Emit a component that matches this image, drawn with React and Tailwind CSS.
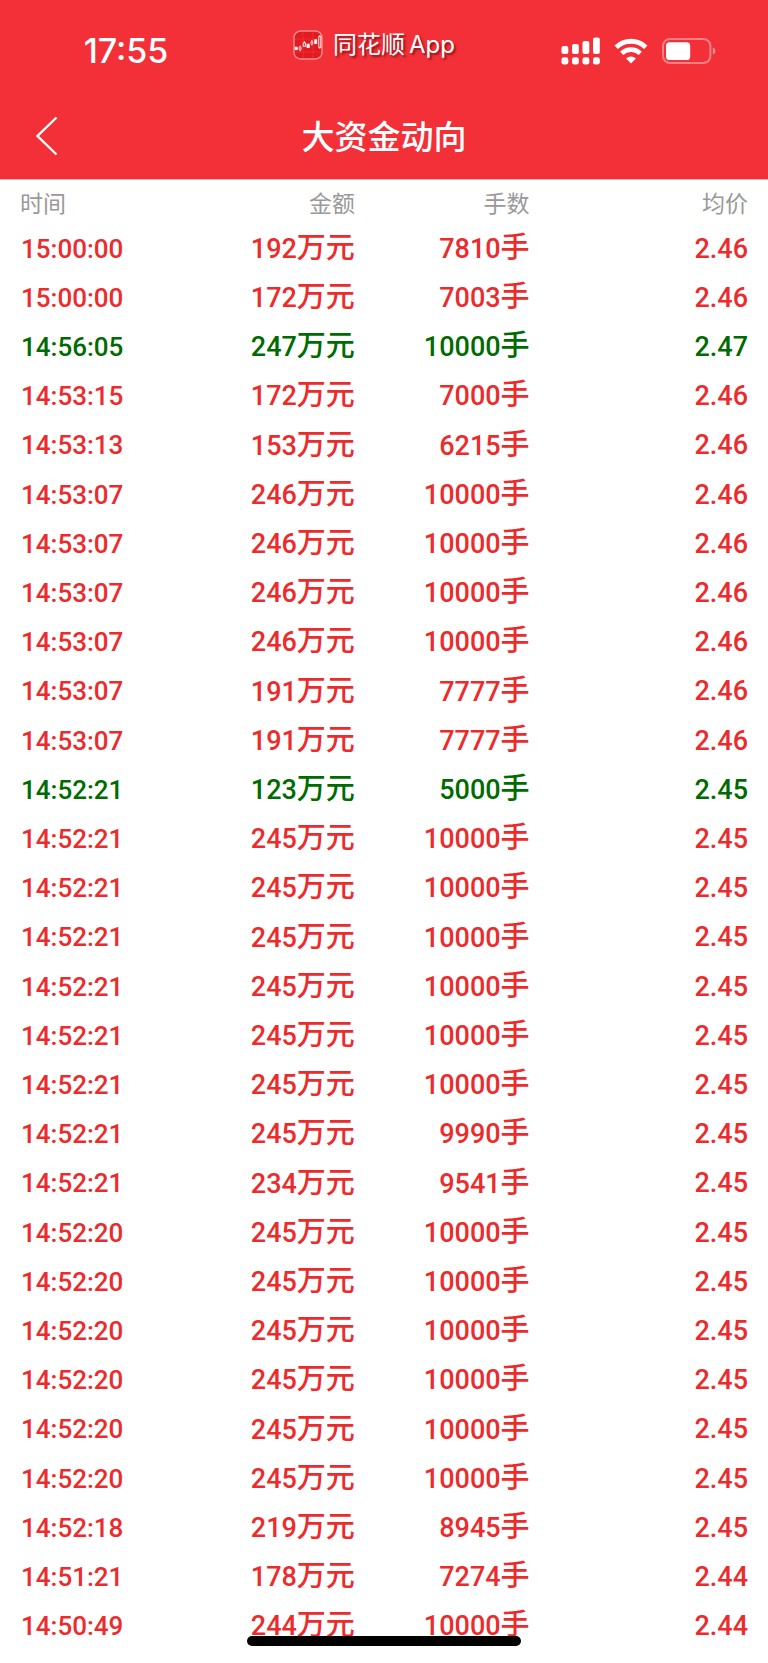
const TRADES = [
  { time: "15:00:00", amount: 192, hands: 7810, price: "2.46", side: "buy" },
  { time: "15:00:00", amount: 172, hands: 7003, price: "2.46", side: "buy" },
  { time: "14:56:05", amount: 247, hands: 10000, price: "2.47", side: "sell" },
  { time: "14:53:15", amount: 172, hands: 7000, price: "2.46", side: "buy" },
  { time: "14:53:13", amount: 153, hands: 6215, price: "2.46", side: "buy" },
  { time: "14:53:07", amount: 246, hands: 10000, price: "2.46", side: "buy" },
  { time: "14:53:07", amount: 246, hands: 10000, price: "2.46", side: "buy" },
  { time: "14:53:07", amount: 246, hands: 10000, price: "2.46", side: "buy" },
  { time: "14:53:07", amount: 246, hands: 10000, price: "2.46", side: "buy" },
  { time: "14:53:07", amount: 191, hands: 7777, price: "2.46", side: "buy" },
  { time: "14:53:07", amount: 191, hands: 7777, price: "2.46", side: "buy" },
  { time: "14:52:21", amount: 123, hands: 5000, price: "2.45", side: "sell" },
  { time: "14:52:21", amount: 245, hands: 10000, price: "2.45", side: "buy" },
  { time: "14:52:21", amount: 245, hands: 10000, price: "2.45", side: "buy" },
  { time: "14:52:21", amount: 245, hands: 10000, price: "2.45", side: "buy" },
  { time: "14:52:21", amount: 245, hands: 10000, price: "2.45", side: "buy" },
  { time: "14:52:21", amount: 245, hands: 10000, price: "2.45", side: "buy" },
  { time: "14:52:21", amount: 245, hands: 10000, price: "2.45", side: "buy" },
  { time: "14:52:21", amount: 245, hands: 9990, price: "2.45", side: "buy" },
  { time: "14:52:21", amount: 234, hands: 9541, price: "2.45", side: "buy" },
  { time: "14:52:20", amount: 245, hands: 10000, price: "2.45", side: "buy" },
  { time: "14:52:20", amount: 245, hands: 10000, price: "2.45", side: "buy" },
  { time: "14:52:20", amount: 245, hands: 10000, price: "2.45", side: "buy" },
  { time: "14:52:20", amount: 245, hands: 10000, price: "2.45", side: "buy" },
  { time: "14:52:20", amount: 245, hands: 10000, price: "2.45", side: "buy" },
  { time: "14:52:20", amount: 245, hands: 10000, price: "2.45", side: "buy" },
  { time: "14:52:18", amount: 219, hands: 8945, price: "2.45", side: "buy" },
  { time: "14:51:21", amount: 178, hands: 7274, price: "2.44", side: "buy" },
  { time: "14:50:49", amount: 244, hands: 10000, price: "2.44", side: "buy" },
];

function AppLogo() {
  return (
    <svg width="30" height="30" viewBox="0 0 30 30" fill="none" aria-hidden="true">
      <rect x="1" y="1" width="28" height="28" rx="6.5" fill="#e31b20" stroke="#fa8f90" strokeWidth="1.4" />
      <path d="M2 9h26M2 22h26M10 2v26M20 2v26" stroke="#ef3d40" strokeWidth="0.5" />
      <g stroke="#fff" strokeWidth="0.9">
        <rect x="2.2" y="17.2" width="2" height="2.4" fill="#fff" />
        <rect x="6.2" y="17" width="1.9" height="2.8" rx="0.6" />
        <path d="M7.1 15.6V17M7.1 19.8v1.4M11.3 11v2" />
        <rect x="10.2" y="13" width="2.2" height="3.2" />
        <rect x="14" y="14.2" width="2.2" height="3.2" fill="#fff" />
        <rect x="18" y="11.4" width="1.8" height="2.6" rx="0.6" />
        <path d="M18.9 10v1.4M18.9 14v1.4" />
        <rect x="21.8" y="9.8" width="1.9" height="3.8" fill="#fff" />
        <rect x="25.8" y="6.6" width="2" height="10.6" />
        <path d="M26.8 5v1.6M26.8 17.2v1.6" />
      </g>
    </svg>
  );
}

function SignalIcon() {
  return (
    <svg width="39" height="28" viewBox="0 0 39 28" fill="#fff" aria-hidden="true">
      <rect x="0.5" y="9" width="6.8" height="8" rx="2" />
      <rect x="11" y="7" width="6.8" height="10" rx="2" />
      <rect x="21.5" y="4" width="6.8" height="13" rx="2" />
      <rect x="32" y="0.4" width="6.8" height="16.6" rx="2" />
      <rect x="0.5" y="20.2" width="6.8" height="7.4" rx="2.4" />
      <rect x="11" y="20.2" width="6.8" height="7.4" rx="2.4" />
      <rect x="21.5" y="20.2" width="6.8" height="7.4" rx="2.4" />
      <rect x="32" y="20.2" width="6.8" height="7.4" rx="2.4" />
    </svg>
  );
}

function WifiIcon() {
  return (
    <svg width="34" height="26" viewBox="0 0 34 26" fill="none" aria-hidden="true">
      <path d="M2.2 9.2a21.4 21.4 0 0 1 29.6 0" stroke="#fff" strokeWidth="4.9" />
      <path d="M7.7 15.4a13.4 13.4 0 0 1 18.6 0" stroke="#fff" strokeWidth="4.6" />
      <path d="M17 25.6l-4.9-5a7 7 0 0 1 9.8 0z" fill="#fff" />
    </svg>
  );
}

function BatteryIcon() {
  return (
    <svg width="54" height="26" viewBox="0 0 54 26" fill="none" aria-hidden="true">
      <rect x="1" y="1" width="47.4" height="24" rx="7" stroke="#fff" strokeOpacity="0.4" strokeWidth="2" />
      <rect x="4" y="4.2" width="24.2" height="17.8" rx="3.6" fill="#fff" />
      <path d="M50.8 9.4c1.6.6 2.6 1.9 2.6 3.6s-1 3-2.6 3.6z" fill="#fff" fillOpacity="0.45" />
    </svg>
  );
}

function TradeRow({ trade }) {
  const color = trade.side === "sell" ? "text-[#006b00]" : "text-[#ec2b2c]";

  return (
    <tr className={`h-[49px] nth-[5n]:h-[50px] ${color}`}>
      <td className="p-0 pl-px text-[26px]">{trade.time}</td>
      <td className="p-0 text-right">
        {trade.amount}
        <span className="text-[29px]">万元</span>
      </td>
      <td className="p-0 text-right">
        {trade.hands}
        <span className="text-[29px]">手</span>
      </td>
      <td className="p-0 text-right">{trade.price}</td>
    </tr>
  );
}

export default function App() {
  return (
    <div className="min-h-screen bg-white font-['Roboto','Noto_Sans_CJK_SC',sans-serif]">
      <header className="border-b border-[#f9b4b6] bg-[#f32f37] text-white">
        {/* 状态栏 */}
        <div className="grid grid-cols-3 items-center pt-[30px] pb-6">
          <span className="pr-1 text-center font-['Inter',sans-serif] text-[34px] leading-[38px] font-medium">
            17:55
          </span>
          <div className="flex items-center justify-center gap-2.5 pr-5 pb-3">
            <AppLogo />
            <span className="flex gap-1 font-['Inter','Noto_Sans_CJK_SC',sans-serif] text-2xl leading-[26px] whitespace-nowrap [text-shadow:2px_2px_2px_rgba(70,0,0,0.55)]">
              <span>同花顺</span>
              <span>App</span>
            </span>
          </div>
          <div className="flex items-center justify-center gap-3.5 pr-1">
            <SignalIcon />
            <WifiIcon />
            <BatteryIcon />
          </div>
        </div>

        {/* 导航栏 */}
        <div className="grid h-[83px] grid-cols-[96px_1fr_96px] items-center">
          <button type="button" aria-label="返回" className="flex h-full items-center pb-1 pl-9">
            <svg width="22" height="40" viewBox="0 0 22 40" fill="none" aria-hidden="true">
              <path d="M20.5 1.5L1.5 20l19 18.5" stroke="#fff" strokeWidth="2.4" />
            </svg>
          </button>
          <h1 className="text-center text-[33px] leading-[48px] font-medium">大资金动向</h1>
        </div>
      </header>

      <main className="px-5">
        <table className="w-full table-fixed border-collapse text-[27px] leading-[44px] font-medium whitespace-nowrap">
          <colgroup>
            <col className="w-[22%]" />
            <col className="w-[24%]" />
            <col className="w-[24%]" />
            <col className="w-[30%]" />
          </colgroup>
          <thead>
            <tr className="h-11 text-[23px] leading-[34px] text-[#999]">
              <th className="p-0 pt-1.5 text-left font-normal">时间</th>
              <th className="p-0 pt-1.5 text-right font-normal">金额</th>
              <th className="p-0 pt-1.5 text-right font-normal">手数</th>
              <th className="p-0 pt-1.5 text-right font-normal">均价</th>
            </tr>
          </thead>
          <tbody>
            {TRADES.map((trade, i) => (
              <TradeRow key={i} trade={trade} />
            ))}
          </tbody>
        </table>
      </main>

      <div className="fixed bottom-[17px] left-1/2 h-2.5 w-[274px] -translate-x-1/2 rounded-full bg-black" />
    </div>
  );
}
